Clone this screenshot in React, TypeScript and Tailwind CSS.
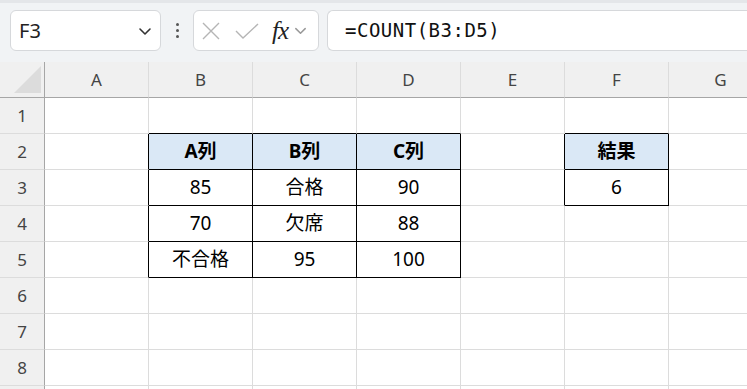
import React from 'react';

type Cell = { text: string; head?: boolean };

const COLS = ['A', 'B', 'C', 'D', 'E', 'F', 'G'];
const ROWS = [1, 2, 3, 4, 5, 6, 7, 8, 9];

const DATA: Record<string, Cell> = {
    B2: { text: 'A列', head: true },
    C2: { text: 'B列', head: true },
    D2: { text: 'C列', head: true },
    F2: { text: '結果', head: true },
    B3: { text: '85' },
    C3: { text: '合格' },
    D3: { text: '90' },
    F3: { text: '6' },
    B4: { text: '70' },
    C4: { text: '欠席' },
    D4: { text: '88' },
    B5: { text: '不合格' },
    C5: { text: '95' },
    D5: { text: '100' },
};

const inTable = (c: number, r: number) => !!DATA[`${COLS[c]}${r}`];

const font = { fontFamily: '"Noto Sans", "Noto Sans CJK JP", sans-serif' };

const Chevron = ({ className }: { className: string }) => (
    <svg viewBox="0 0 16 16" className={className} fill="none" stroke="currentColor" strokeWidth="1.6" strokeLinecap="round" strokeLinejoin="round">
        <path d="M3 6l5 5 5-5" />
    </svg>
);

const Toolbar = () => (
    <div className="h-[62px] bg-[#f1f3f5] border-t-[3px] border-[#e4e6e9] flex items-start pt-[7px] pl-[10px] gap-0">
        {/* 名前ボックス */}
        <div className="w-[151px] h-[41px] bg-white border border-[#d6d8db] rounded-[6px] flex items-center pl-[8px] pr-[7px]">
            <span className="text-[20px] text-[#222] flex-1 leading-none" style={font}>F3</span>
            <Chevron className="w-[16px] h-[16px] text-[#333]" />
        </div>
        <div className="w-[32px] h-[41px] flex flex-col items-center justify-center gap-[3px]">
            <span className="w-[3px] h-[3px] rounded-full bg-[#555]" />
            <span className="w-[3px] h-[3px] rounded-full bg-[#555]" />
            <span className="w-[3px] h-[3px] rounded-full bg-[#555]" />
        </div>
        <div className="w-[126px] h-[41px] bg-white border border-[#d6d8db] rounded-[6px] flex items-center pl-[7px]">
            <svg viewBox="0 0 20 20" className="w-[20px] h-[20px] text-[#b5b5b5]" fill="none" stroke="currentColor" strokeWidth="1.4">
                <path d="M2 2l16 16M18 2L2 18" />
            </svg>
            <svg viewBox="0 0 24 20" className="w-[24px] h-[20px] ml-[14px] text-[#b5b5b5]" fill="none" stroke="currentColor" strokeWidth="1.4">
                <path d="M1 10l7 7L23 3" />
            </svg>
            <span className="ml-[13px] text-[25px] italic text-[#222] leading-none tracking-[-1px]" style={{ fontFamily: '"Liberation Serif", serif' }}>fx</span>
            <Chevron className="w-[15px] h-[15px] ml-[5px] text-[#999]" />
        </div>
        <div className="ml-[8px] flex-1 h-[41px] bg-white border border-[#d6d8db] border-r-0 rounded-l-[6px] flex items-center pl-[17px]">
            <span className="text-[19px] text-[#111] leading-none tracking-[0.5px]" style={{ fontFamily: '"DejaVu Sans Mono", monospace' }}>=COUNT(B3:D5)</span>
        </div>
    </div>
);

const DataCell = ({ c, r }: { c: number; r: number }) => {
    const cell = DATA[`${COLS[c]}${r}`];
    const blackRight = inTable(c, r) || inTable(c + 1, r);
    const blackBottom = inTable(c, r) || inTable(c, r + 1);
    return (
        <div
            className={`h-[36px] flex items-center justify-center border-r border-b ${blackRight ? 'border-r-black' : 'border-r-[#dcdcdc]'} ${blackBottom ? 'border-b-black' : 'border-b-[#dcdcdc]'} ${cell?.head ? 'bg-[#dae8f6] font-bold' : 'bg-white'} text-[19px] text-black`}
            style={font}
        >
            {cell?.text}
        </div>
    );
};

export default function App() {
    return (
        <div className="w-[747px] h-[389px] overflow-hidden bg-white">
            <Toolbar />
            <div className="grid grid-cols-[45px_repeat(7,104px)]">
                {/* 左上隅 */}
                <div className="h-[36px] bg-[#f0f0f0] border-r border-b border-[#a6a6a6] flex items-end justify-end pr-[3px] pb-[4px]">
                    <div className="w-[27px] h-[27px] bg-[#dcdcdc] [clip-path:polygon(100%_0,100%_100%,0_100%)]" />
                </div>
                {COLS.map(col => (
                    <div key={col} className="h-[36px] bg-[#f0f0f0] border-r border-r-[#dcdcdc] border-b border-b-[#a6a6a6] flex items-center justify-center text-[17px] text-[#444]" style={font}>
                        {col}
                    </div>
                ))}
                {ROWS.map(r => (
                    <React.Fragment key={r}>
                        <div className="h-[36px] bg-[#f0f0f0] border-r border-r-[#a6a6a6] border-b border-b-[#dcdcdc] flex items-center justify-center text-[17px] text-[#444]" style={font}>
                            {r < 9 ? r : ''}
                        </div>
                        {COLS.map((_, c) => <DataCell key={c} c={c} r={r} />)}
                    </React.Fragment>
                ))}
            </div>
        </div>
    );
}
